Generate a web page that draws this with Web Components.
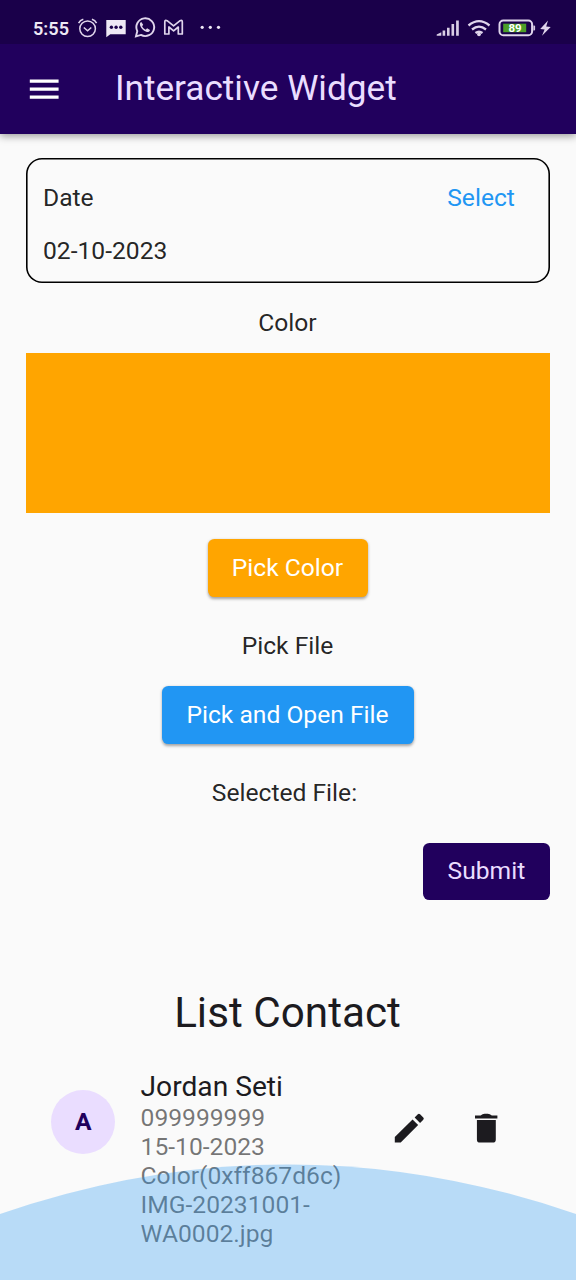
<!DOCTYPE html>
<html lang="en"><head><meta charset="utf-8"><title>Interactive Widget</title>
<style>
html,body{margin:0;padding:0}
body{width:576px;height:1280px;overflow:hidden;background:#fafafa;font-family:Roboto,sans-serif}
</style></head><body>
<interactive-app></interactive-app>
<script>
function define(name, html){
  const t=document.createElement('template'); t.innerHTML=html;
  customElements.define(name, class extends HTMLElement{
    constructor(){super();this.attachShadow({mode:'open'}).append(t.content.cloneNode(true));}
  });
}
define('status-bar', `<style>
:host{display:flex;height:44px;box-sizing:border-box;background:#1a004a;color:#e9e2f1}
svg{display:block}
text{font-family:Roboto,sans-serif}
</style>
<svg width="576" height="44" viewBox="0 0 576 44" fill="none" stroke="#e0d5ec" stroke-width="1.5">
<text x="33" y="34.5" font-size="19" font-weight="600" fill="#eee8f5" stroke="none" textLength="36" lengthAdjust="spacingAndGlyphs">5:55</text>
<circle cx="87.6" cy="28.700" r="7.800"/><path d="M83.8 27.500l3.800 3.300 3.700-3.300M78.600 23.200q1.500-3 4.700-3.900M96.600 23.200q-1.500-3-4.700-3.900"/>
<path d="M106.300 20h19.400v14.300h-15.400l-4 3z" fill="#eee8f5" stroke="none"/><g fill="#1a004a" stroke="none"><circle cx="111.400" cy="27.300" r="1.700"/><circle cx="116.100" cy="27.300" r="1.700"/><circle cx="120.800" cy="27.300" r="1.700"/></g>
<path d="M136 36.300l1.300-5.200a8.900 8.900 0 1 1 3.600 3.800z" stroke-width="1.900"/>
<path d="M141.300 22c-1.300.4-1.700 1.900-1.200 3.400 1 3 3.200 5.200 6.200 6.300 1.600.600 3.400 0 3.700-1.800l-2.900-1.600-1.400 1.400c-1.700-.8-2.900-2-3.600-3.500l1.100-1.400z" fill="#e0d5ec" stroke="none"/>
<path d="M164.800 34V22q0-2.500 2.300-1.300l6.500 5.100 6.500-5.100q2.200-1.200 2.200 1.300v12h-4v-7l-4.700 3.800-4.700-3.800v7z" stroke-linejoin="round" stroke-width="1.700"/>
<g fill="#eee8f5" stroke="none"><circle cx="202.200" cy="27.300" r="1.600"/><circle cx="210.300" cy="27.300" r="1.600"/><circle cx="218.500" cy="27.300" r="1.600"/></g>
<path d="M436.700 35.800v-1.200l4.600-2.400v3.600zM442.600 30.500h2.600v5.300h-2.600zM447 27.800h2.600v8h-2.600zM451.500 24h2.600v11.800h-2.600zM456.100 20.500h2.700v15.300h-2.700z" fill="#d9cee5" stroke="none"/>
<path d="M468.500 25.500q10.500-8.700 21 0M472 29.500q7-5.700 14 0M475.500 33q3.500-2.600 7 0" stroke-width="2.300"/><circle cx="479" cy="34.300" r="1.900" fill="#e0d5ec" stroke="none"/>
<rect x="499.500" y="20.500" width="32.600" height="14.700" rx="3.800" stroke-width="2"/>
<rect x="503.200" y="23.700" width="23" height="8.500" fill="#4c9e28" stroke="none"/>
<path d="M533.300 25.500h.8q1 0 1 1v3q0 1-1 1h-.8z" fill="#d5c9e2" stroke="none"/>
<text x="515" y="31.800" text-anchor="middle" font-size="11.500" font-weight="700" fill="#fff" stroke="none">89</text>
<path d="M548 20.500l-7.800 8.600 4.400.500-2.600 6.200 8.700-8.700-4.500-.7z" fill="#e0d5ec" stroke="none"/>
</svg>`);
define('app-bar', `<style>
:host{display:flex;align-items:center;height:89.600px;box-sizing:border-box;padding:0 0 0 25.600px;background:#21005d;color:#eaddff;font-size:35.200px}
svg{width:38.400px;height:38.400px;margin-right:51.300px;margin-left:-.4px;flex:none}
div{line-height:42px;white-space:nowrap;transform:translateY(-1px)}
</style><svg viewBox="0 0 24 24" fill="#fff"><path d="M3 18h18v-2H3v2zm0-5h18v-2H3v2zm0-7v2h18V6H3z"/></svg><div><slot></slot></div>`);
define('date-card', `<style>
:host{display:flex;flex-direction:column;height:125px;box-sizing:border-box;box-shadow:inset 0 0 0 1.600px #000;border-radius:16px;padding:25.500px 35.500px 0 17.400px;gap:24px;line-height:29px}
.row{display:flex;justify-content:space-between}
.link{color:#2196f3}
</style><div class="row"><span><slot name="label"></slot></span><span class="link"><slot name="action"></slot></span></div><div><slot></slot></div>`);
define('fill-button', `<style>
:host{display:inline-flex;align-items:center;justify-content:center;height:57.600px;box-sizing:border-box;border-radius:6.400px;padding:0 1px 1.500px 0;background:var(--bg);color:var(--fg,#fff);box-shadow:var(--shadow,0 1.500px 3px rgba(0,0,0,.35));white-space:nowrap}
</style><slot></slot>`);
define('contact-tile', `<style>
:host{display:flex;height:178px;padding-left:25.600px}
.avatar{width:64px;height:64px;margin:19.500px 25.400px 0 0;border-radius:50%;background:#eaddff;color:#21005d;font-size:24.640px;font-weight:700;display:flex;align-items:center;justify-content:center;flex:none}
.body{width:209px;flex:none}
.name{font-size:28.160px;line-height:33px;color:#1c1b1f}
.sub{line-height:29px;color:rgba(0,0,0,.54)}
::slotted(*){display:block;white-space:nowrap}
.icons{display:flex;gap:38.600px;padding:38.400px 0 0 40.200px}
svg{width:38.400px;height:38.400px;display:block}
</style><div class="avatar"><slot name="initial"></slot></div>
<div class="body"><div class="name"><slot name="name"></slot></div><div class="sub"><slot></slot></div></div>
<div class="icons"><svg viewBox="0 0 24 24" fill="#1c1b1f"><path d="M3 17.500V21h3.700L17.600 10 14.100 6.500zM15.400 5.300l2-2q.7-.7 1.400 0l2 2q.700.700 0 1.400l-2 2z"/></svg>
<svg viewBox="0 0 24 24" fill="#1c1b1f"><path d="M6.200 6.900H18V19q0 2-2 2H8.200q-2 0-2-2zM5 4h3.500q1.200-1 2.500-1h2q1.300 0 2.500 1H19v1.900H5z"/></svg></div>`);
define('bottom-wave', `<style>
:host{position:absolute;left:0;bottom:0;width:576px;height:116px;pointer-events:none}svg{display:block}
</style><svg width="576" height="116" viewBox="0 0 576 116"><path d="M0 50Q288-49.200 576 50V116H0z" fill="#2196f3" fill-opacity=".3"/></svg>`);
define('interactive-app', `<style>
:host{display:flex;flex-direction:column;position:relative;width:576px;height:1280px;overflow:hidden;background:#fafafa;color:rgba(0,0,0,.87);font-size:24.640px;line-height:29px}
header{box-shadow:0 2px 8px rgba(0,0,0,.4);flex:none}
main{display:flex;flex-direction:column;align-items:center;padding:24.400px 25.600px 0}
date-card,contact-tile{align-self:stretch}
.color{margin:25.500px 1px 0 0}
.swatch{align-self:stretch;height:160px;background:#ffa500;margin-top:16px}
.b1{width:160.500px;margin-top:25.800px;--bg:#ffa500}
.file{margin:34.400px 1px 0 0}
.b2{width:251.500px;margin-top:26px;--bg:#2196f3}
.sel{margin:34.400px 1px 0 0}
.b3{width:127px;align-self:flex-end;margin-top:35.600px;--bg:#21005d;--fg:#eaddff;--shadow:none}
h1{font-weight:400;font-size:42.240px;line-height:50px;margin:87.200px 1px 32.500px 0;color:#1c1b1f}
</style>
<header><status-bar></status-bar><app-bar>Interactive Widget</app-bar></header>
<main>
<date-card><span slot="label">Date</span><span slot="action">Select</span>02-10-2023</date-card>
<div class="color">Color</div><div class="swatch"></div>
<fill-button class="b1">Pick Color</fill-button>
<div class="file">Pick File</div>
<fill-button class="b2">Pick and Open File</fill-button>
<div class="sel">Selected File:&nbsp;</div>
<fill-button class="b3">Submit</fill-button>
<h1>List Contact</h1>
<contact-tile><span slot="initial">A</span><span slot="name">Jordan Seti</span><span>099999999</span><span>15-10-2023</span><span>Color(0xff867d6c)</span><span>IMG-20231001-</span><span>WA0002.jpg</span></contact-tile>
</main><bottom-wave></bottom-wave>`);
</script></body></html>
